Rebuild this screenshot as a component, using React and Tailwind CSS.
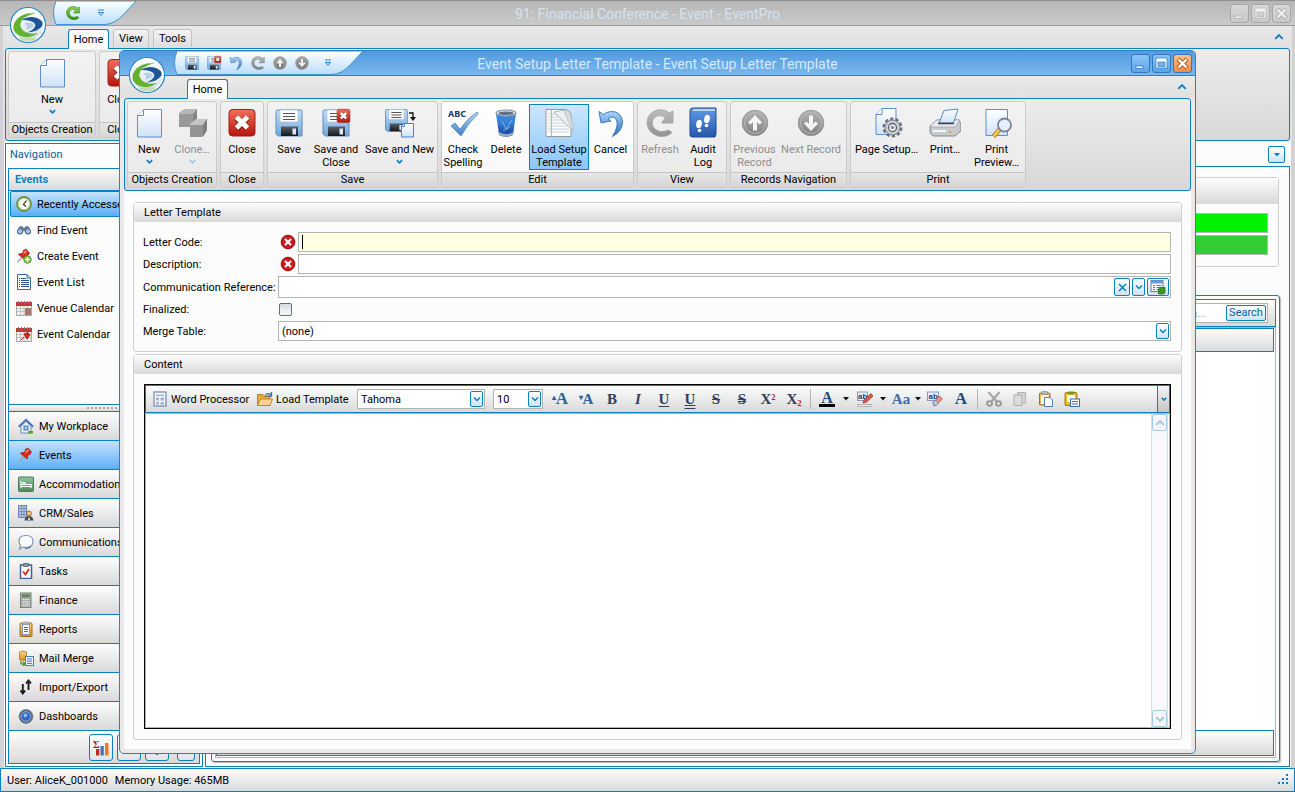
import React from "react";

/* ---------- shared paint servers ---------- */

const GRADS = [
  ["gDoc", "#ffffff", "#cfe2f8"],
  ["gRed", "#f0705a", "#b5150c"],
  ["gBlue", "#b9dcf8", "#3f7fc4"],
  ["gSave", "#c5e2f8", "#6fa6dc"],
  ["gDark", "#5a6068", "#14181c"],
  ["gGreyD", "#a9a9a9", "#6e6e6e"],
  ["gBook", "#5f9be8", "#2558a8"],
  ["gBin", "#5aa8f0", "#0b3f9c"],
  ["gGreen", "#8fd84a", "#2f9410"],
  ["gBed", "#8fc49a", "#4d8a5a"],
  ["gGold", "#fbd98a", "#d98a1e"],
  ["gOrb", "#ffffff", "#d4dfe8"],
  ["gUndo", "#a9d4fa", "#2a6cbc"],
  ["gQat", "#ffffff", "#b9ddfb"],
];

function Defs() {
  return (
    <svg width="0" height="0" className="absolute" aria-hidden="true">
      <defs>
        {GRADS.map(([id, a, b]) => (
          <linearGradient key={id} id={id} x1="0" y1="0" x2="0" y2="1">
            <stop offset="0" stopColor={a} />
            <stop offset="1" stopColor={b} />
          </linearGradient>
        ))}
      </defs>
    </svg>
  );
}

function Svg({ size = 32, box = 32, children, className = "" }) {
  return (
    <svg width={size} height={size} viewBox={`0 0 ${box} ${box}`} fill="none" aria-hidden="true" className={`shrink-0 ${className}`}>
      {children}
    </svg>
  );
}

/* ---------- large ribbon icons ---------- */

const NewIcon = (p) => (
  <Svg {...p}>
    <path d="M10.5 2.5H28.5V30H4.500V8.500Z" fill="url(#gDoc)" stroke="#5a8fd0" />
    <path d="M10.500 2.500V8.500H4.500" fill="#fff" stroke="#5a8fd0" />
  </Svg>
);

const CloneIcon = (p) => (
  <Svg {...p}>
    <path d="M3 6L9 2H21L18 6V17L16 20H3Z" fill="#8a8a8a" />
    <path d="M3 6L9 2H21L17 7H3Z" fill="#adadad" />
    <path d="M17 7L21 2V13L17 19Z" fill="#737373" />
    <path d="M14 17L20 12H31V23L26 30H14Z" fill="#858585" />
    <path d="M14 17L20 12H31L27 18H14Z" fill="#bdbdbd" />
    <path d="M27 18L31 12V23L27 30Z" fill="#6c6c6c" />
  </Svg>
);

const RedBox = () => (
  <>
    <rect x="3" y="2.500" width="26" height="26.500" rx="3.500" fill="url(#gRed)" stroke="#a02018" />
    <path d="M10.500 10.500L21.500 21.500M21.500 10.500L10.500 21.500" stroke="#8c120a" strokeWidth="6.500" />
    <path d="M10.500 10L21.500 21M21.500 10L10.500 21" stroke="#fff" strokeWidth="5" />
  </>
);

const CloseIcon = (p) => (
  <Svg {...p}>
    <RedBox />
  </Svg>
);

const Floppy = () => (
  <>
    <path d="M3 4.500Q3 3 4.500 3H28Q29 3 29 4.500V29H5.500L3 27Z" fill="url(#gSave)" stroke="#5b8cc4" />
    <rect x="7" y="3" width="18" height="12" fill="#fff" stroke="#9fb6cc" strokeWidth=".6" />
    <path d="M10 6.500H22M10 9.500H22M10 12.500H22" stroke="#555" strokeWidth="1.200" />
    <path d="M8 19.500H25V29H8Z" fill="url(#gDark)" />
    <rect x="19.500" y="21.500" width="3.500" height="6" fill="#dce8f4" />
  </>
);

const SaveIcon = (p) => (
  <Svg {...p}>
    <Floppy />
  </Svg>
);

const SaveCloseIcon = (p) => (
  <Svg {...p}>
    <Floppy />
    <g transform="translate(15.500 1) scale(.5)">
      <RedBox />
    </g>
  </Svg>
);

const SaveNewIcon = (p) => (
  <Svg {...p}>
    <g transform="translate(-1 0) scale(.84)">
      <Floppy />
    </g>
    <path d="M25 6H29V13" stroke="#111" strokeWidth="1.300" />
    <path d="M26 10H32L29 14Z" fill="#111" />
    <path d="M20 16.500H29.500V30H17.500V19Z" fill="url(#gDoc)" stroke="#4a82cc" />
    <path d="M20.500 16.500V19.500H17.500" stroke="#4a82cc" />
  </Svg>
);

const SpellIcon = (p) => (
  <Svg {...p}>
    <text x="1" y="10" fontFamily="Noto Sans, sans-serif" fontSize="9" fontWeight="700" fill="#26376a">ABC</text>
    <path d="M4 19L8 16L13 22Q20 12 30 5L31 7Q22 15 14 29Z" fill="url(#gBlue)" stroke="#4a86c8" strokeWidth=".8" />
  </Svg>
);

const BinIcon = (p) => (
  <Svg {...p}>
    <path d="M6 6L9 28Q16 31.500 23 28L26 6Z" fill="url(#gBin)" />
    <path d="M6 6Q16 11 26 6L24.600 15Q16 18 7.400 15Z" fill="#2f83dc" opacity=".7" />
    <path d="M12 14L16 22L22 13M13 24L20 20" stroke="#9fd0ff" strokeWidth="1" opacity=".7" />
    <path d="M9 25Q16 29 23.500 25L23 28Q16 31.500 9 28Z" fill="#9aa8ba" />
    <ellipse cx="16" cy="6" rx="10" ry="3" fill="#dfe6ee" stroke="#8593a5" strokeWidth="1.200" />
    <ellipse cx="16" cy="6.200" rx="7.500" ry="1.700" fill="#5f6f86" />
  </Svg>
);

const TemplateIcon = (p) => (
  <Svg {...p}>
    <path d="M3 2.500H22Q27 3 28 8V29.500H3Z" fill="#fbfbfb" stroke="#9a9a9a" />
    <path d="M5 7H26M5 10H26M5 13H26M5 16H26M5 19H26M5 22H26M5 25H26" stroke="#c4cbd4" strokeWidth=".9" />
    <path d="M8.500 3V29" stroke="#f0a0a0" />
    <path d="M11 5L30 24L28 18L21 3Z" fill="#eef0f3" stroke="#a2a8b0" strokeWidth=".8" />
    <path d="M21 3Q27 3 27.500 9L30 18V24L25 14Z" fill="#d9dde2" stroke="#b4b8be" strokeWidth=".7" />
  </Svg>
);

const UndoIcon = (p) => (
  <Svg {...p}>
    <path d="M4 4.500L6 16L16 14L13 11.500Q19 8 21.500 13Q24 19 17.500 29.500Q28 24 27.500 14Q26 4 15.500 4.500Q11 5 8.500 7.500Z" fill="url(#gUndo)" stroke="#3470b4" strokeWidth=".9" />
  </Svg>
);

const RefreshIcon = ({ green, ...p }) => (
  <Svg {...p}>
    <path
      d="M24.500 23L28 25.500Q22 31 14 29Q4 26 3 16Q3.500 5 14 3Q21 2 25 6L29 4V16H17.500L21.500 10.500Q15 6.500 10 11Q6.500 16 10 21Q15.500 27 24.500 23Z"
      fill={green ? "url(#gGreen)" : "url(#gGreyD)"}
      stroke={green ? "#24700c" : "#8a8a8a"}
      strokeWidth=".9"
      opacity={green ? 1 : 0.85}
    />
  </Svg>
);

const AuditIcon = (p) => (
  <Svg {...p}>
    <path d="M3 3.500Q3 1 6 1H29V27L28 30H5Q3 30 3 28Z" fill="url(#gBook)" stroke="#1f4c98" />
    <path d="M6 3H28" stroke="#dbe8fb" strokeWidth="1.500" />
    <ellipse cx="12" cy="17" rx="2.800" ry="4.200" fill="#fff" transform="rotate(10 12 17)" />
    <ellipse cx="12.500" cy="23.500" rx="1.800" ry="1.800" fill="#fff" />
    <ellipse cx="20" cy="12" rx="2.800" ry="4.200" fill="#fff" transform="rotate(10 20 12)" />
    <ellipse cx="19.500" cy="18.500" rx="1.800" ry="1.800" fill="#fff" />
  </Svg>
);

const ArrowCircle = ({ down, ...p }) => (
  <Svg {...p}>
    <circle cx="16" cy="16" r="12.800" fill="url(#gGreyD)" stroke="#8e8e8e" />
    <circle cx="16" cy="16" r="10.500" stroke="#b8b8b8" strokeWidth=".8" />
    <path
      d="M16 8L23 15.500L20.500 17.500L18 15V23.500H14V15L11.500 17.500L9 15.500Z"
      fill="#f6f6f6"
      transform={down ? "rotate(180 16 16)" : undefined}
    />
  </Svg>
);
const UpIcon = (p) => <ArrowCircle {...p} />;
const DownIcon = (p) => <ArrowCircle down {...p} />;

const PageSetupIcon = (p) => (
  <Svg {...p}>
    <path d="M11 1.500H25V27.500H5V7.500Z" fill="url(#gDoc)" stroke="#5a8fd0" />
    <path d="M11 1.500V7.500H5" fill="#fff" stroke="#5a8fd0" />
    <circle cx="21.500" cy="20.500" r="8.500" stroke="#6f747c" strokeWidth="3" strokeDasharray="3.300 2.040" />
    <circle cx="21.500" cy="20.500" r="7.500" fill="#c9ced6" stroke="#7d838c" />
    <circle cx="21.500" cy="20.500" r="4" fill="#eef1f5" stroke="#5f656e" strokeWidth="1.300" />
    <circle cx="21.500" cy="20.500" r="1.800" fill="#8b919a" />
  </Svg>
);

const PrinterIcon = (p) => (
  <Svg {...p}>
    <path d="M1 19L8 13H30L32 17V24L26 29H4L1 26Z" fill="#c6c9ce" stroke="#80858d" strokeWidth=".9" />
    <path d="M1 19L8 13H31L26 20H4Z" fill="#e9ebee" stroke="#9a9ea5" strokeWidth=".7" />
    <path d="M10 16L15 3.500L29 2L24.500 16Z" fill="url(#gDoc)" stroke="#4c7fbe" strokeWidth=".9" />
    <path d="M9 16.500H25" stroke="#3c4148" strokeWidth="1.500" />
    <path d="M4 24H17" stroke="#f6f6f6" strokeWidth="2" />
    <circle cx="21" cy="25" r="1.200" fill="#f2a020" />
  </Svg>
);

const PreviewIcon = (p) => (
  <Svg {...p}>
    <path d="M5 2.500H26.500V28.500H5Z" fill="url(#gDoc)" stroke="#5a8fd0" />
    <path d="M19 22L12.500 29.500" stroke="#c98a20" strokeWidth="4.500" />
    <path d="M18.500 22.500L13 29" stroke="#f6d060" strokeWidth="2" />
    <circle cx="23.500" cy="18" r="6.500" fill="#e4f0fb" stroke="#7b8798" strokeWidth="1.800" />
  </Svg>
);

/* ---------- small icons ---------- */

const S16 = (p) => <Svg size={16} box={16} {...p} />;

const ClockIcon = () => (
  <S16>
    <circle cx="8" cy="8" r="7" fill="#f4f8ec" stroke="#6f9040" strokeWidth="1.800" />
    <circle cx="8" cy="8" r="5.500" stroke="#c4d8a0" />
    <path d="M10.500 4.500L7.500 8.500L10 10.500" stroke="#333" strokeWidth="1.200" />
  </S16>
);
const BinocularIcon = () => (
  <S16>
    <path d="M3 5Q5 3 7 5L8 6L9 5Q11 3 13 5L15 9Q15.500 12.500 12 12.500Q9 12.500 8.500 9H7.500Q7 12.500 4 12.500Q.5 12.500 1 9Z" fill="#6b7f9c" />
    <circle cx="4" cy="9.300" r="2.500" fill="#a8c8ec" stroke="#566a88" />
    <circle cx="12" cy="9.300" r="2.500" fill="#a8c8ec" stroke="#566a88" />
  </S16>
);
const PinShape = () => (
  <>
    <path d="M1.500 14.500L6 9" stroke="#a6a6a6" strokeWidth="1.300" />
    <path d="M7 2.500L10 1L13.500 5L12 7.500L11 7.500L9.500 9.500Q10 11.500 9 12L2.500 6.500Q3.500 5 5.500 5.500L7.500 4Z" fill="#d9291c" stroke="#8e140c" strokeWidth=".6" />
    <path d="M8.500 3L10 2.300L11 3.500L7 7Z" fill="#ff8a78" />
  </>
);
const PinIcon = () => (
  <S16>
    <PinShape />
  </S16>
);
const PinPlusIcon = () => (
  <S16>
    <PinShape />
    <circle cx="11.500" cy="11.500" r="3.800" fill="#7cc242" stroke="#4a8a1c" strokeWidth=".7" />
    <path d="M11.500 9.300V13.700M9.300 11.500H13.700" stroke="#fff" strokeWidth="1.500" />
  </S16>
);
const ListIcon = () => (
  <S16>
    <path d="M1.500 .5H11L14.500 4V15.500H1.500Z" fill="#fff" stroke="#2f6ca8" />
    <path d="M11 .5V4H14.500" stroke="#2f6ca8" />
    <path d="M5 4.500H10M5 6.500H13M5 8.500H13M5 10.500H13M5 12.500H13" stroke="#274f86" />
    <path d="M3 4.500H4M3 6.500H4M3 8.500H4M3 10.500H4M3 12.500H4" stroke="#274f86" />
  </S16>
);
const CalendarIcon = ({ event }) => (
  <S16>
    <rect x=".5" y="2.500" width="15" height="13" fill="#f2f2f2" stroke="#aaa" />
    <rect x="0" y="2" width="16" height="4" fill="#c2383a" />
    <path d="M2.500 1V4M5.500 1V4M8.500 1V4M11.500 1V4M14 1V4" stroke="#777" />
    <path d="M1 8.500H15M1 11.500H15M4.500 6V15M8 6V15M11.500 6V15" stroke="#b8b8b8" strokeWidth=".8" />
    {event ? <path d="M5 14L8 11M8 8L12 6.500L14 9L11 13Z" fill="#d9291c" stroke="#b01c14" /> : <path d="M9 8H15V15H9Z" fill="#a5786a" />}
  </S16>
);
const HomeIcon = () => (
  <S16>
    <path d="M3 8V15H13V8L8 3.500Z" fill="#f2f6fb" stroke="#6b88b4" />
    <path d="M.8 8.800L8 1.800L15.200 8.800" stroke="#4b78b8" strokeWidth="1.900" />
    <rect x="6" y="8" width="4" height="4" fill="#9cc4ee" stroke="#4b78b8" />
    <path d="M10 13H15V15.500H10Z" fill="#5aa82c" />
  </S16>
);
const BedIcon = () => (
  <S16>
    <rect x=".5" y="1" width="15" height="14.500" rx="1" fill="url(#gBed)" stroke="#4f7c58" />
    <path d="M3 5V12M3 10.500H13V12M3.500 8.500H13V10.500" stroke="#fff" strokeWidth="1.200" />
    <rect x="4.500" y="6" width="3" height="1.800" fill="#fff" />
  </S16>
);
const CrmIcon = () => (
  <S16>
    <rect x=".5" y=".5" width="8" height="12" fill="#b4c6e6" stroke="#6c84b4" />
    <path d="M1 3.500H8M1 6.500H8M1 9.500H8M3.500 1V12M6 1V12" stroke="#6c84b4" strokeWidth=".7" />
    <path d="M6.500 15.500Q7 11 11 11Q15 11 15.500 15.500Z" fill="#4a4a50" />
    <circle cx="11" cy="8.500" r="2.500" fill="#f0c080" stroke="#7a4a18" strokeWidth=".7" />
    <path d="M11 11.500L10 15H12Z" fill="#fff" />
  </S16>
);
const BubbleIcon = () => (
  <S16>
    <path d="M8 1.500Q15 1.500 15 7.500Q15 13.500 8 13.500Q6.500 13.500 5 13L1.500 14.800L2.800 11.500Q1 10 1 7.500Q1 1.500 8 1.500Z" fill="#fdfdfe" stroke="#8090a8" strokeWidth="1.100" />
    <path d="M7 14.300Q11 14.300 13 12.500" stroke="#4c7cbc" strokeWidth="1.200" />
  </S16>
);
const ClipCheckIcon = () => (
  <S16>
    <rect x="2.500" y="2" width="11" height="13.500" fill="#fff" stroke="#3f6496" strokeWidth="1.500" />
    <rect x="5" y=".5" width="6" height="3" rx="1" fill="#8d949c" stroke="#4c5158" strokeWidth=".7" />
    <path d="M5 8.500L7.500 11.500L11 6" stroke="#d02820" strokeWidth="1.800" />
  </S16>
);
const CalcIcon = () => (
  <S16>
    <rect x="2.500" y="1" width="10.500" height="14.500" fill="#a9aca8" stroke="#7c807c" />
    <rect x="4" y="2.500" width="7.500" height="2.800" fill="#4f8a50" />
    <path d="M4.500 7.500H11.500M4.500 9.700H11.500M4.500 11.900H11.500M4.500 14H11.500" stroke="#f5f5f5" strokeWidth="1.200" strokeDasharray="1.200 .8" />
  </S16>
);
const ReportIcon = () => (
  <S16>
    <rect x="2" y="2" width="12" height="13.500" rx="1" fill="url(#gGold)" stroke="#a86a10" />
    <rect x="4.500" y="3.500" width="7" height="10" fill="#fff" stroke="#6c88b8" strokeWidth=".8" />
    <path d="M6 6.500H10M6 8.500H10M6 10.500H10" stroke="#4470b0" />
    <rect x="5.500" y=".7" width="5" height="2.600" fill="#a8b0bc" />
  </S16>
);
const MailMergeIcon = () => (
  <S16>
    <path d="M1.500 2Q4.500 0 8.500 2V9.500Q4.500 11.500 1.500 9.500Z" fill="url(#gGold)" stroke="#b0762a" strokeWidth=".8" />
    <path d="M3 11V14H6M5 12L7 14L5 16" stroke="#2f9410" strokeWidth="1.200" />
    <rect x="7.500" y="6.500" width="8" height="9" fill="#eef5fd" stroke="#4a78b8" />
    <path d="M9 9H14M9 11.200H14M9 13.400H14" stroke="#4a78b8" />
  </S16>
);
const ArrowsIcon = () => (
  <S16>
    <path d="M4.800 5V14M2.500 11.500L4.800 14.500L7.200 11.500M10.500 11V2M8 4.500L10.500 1.500L13 4.500" stroke="#1c1c1c" strokeWidth="1.900" />
  </S16>
);
const GaugeIcon = () => (
  <S16>
    <circle cx="8" cy="8.500" r="7" fill="#5c6470" stroke="#8a919c" />
    <circle cx="8" cy="8.500" r="4.800" fill="#2468d0" stroke="#a8bcdc" strokeWidth=".8" />
    <circle cx="7.500" cy="7.500" r="2" fill="#8cc0ff" />
    <circle cx="8.500" cy="8.800" r=".9" fill="#e03020" />
  </S16>
);
const SumChartIcon = () => (
  <S16>
    <text x="0" y="8" fontFamily="Liberation Serif, serif" fontSize="10" fontWeight="700" fill="#b01818">Σ</text>
    <rect x="3" y="9" width="3.300" height="6.500" fill="#c8281c" />
    <rect x="7.500" y="6" width="3.300" height="9.500" fill="#4a70b4" />
    <rect x="12" y="3" width="3.500" height="12.500" fill="#ee7a18" />
  </S16>
);
const WordIcon = () => (
  <S16>
    <rect x="2" y="1" width="12" height="14" fill="#f4f7fc" stroke="#8090b8" strokeWidth="1.300" />
    <path d="M4 3.500H12V5H4ZM4 6.500H7V9.500H4ZM8.500 6.500H12V9.500H8.500ZM4 11H7V13.500H4ZM8.500 11H12V13.500H8.500Z" fill="#a4b2d4" />
  </S16>
);
const FolderIcon = () => (
  <S16>
    <path d="M.5 3.500H6L7.500 5.500H13V14.500H.5Z" fill="#e8a83c" stroke="#a86c14" strokeWidth=".8" />
    <path d="M.5 14.500L3.500 8H15.500L12.800 14.500Z" fill="#fbd68a" stroke="#b87a1c" strokeWidth=".8" />
    <path d="M8 5Q10 1 14 3.500M14.500 1V5H10.500" stroke="#3a70b0" strokeWidth="1.300" />
  </S16>
);
const HighlightIcon = () => (
  <S16>
    <rect x=".5" y="1" width="10" height="8.500" fill="#e8eefa" stroke="#6f86b8" strokeWidth=".8" />
    <text x="1" y="8" fontFamily="Liberation Sans, sans-serif" fontSize="8" fill="#28407c">ab</text>
    <path d="M7 9L14 2.500L16 5L9.500 11L6 12Z" fill="#d85a4c" stroke="#8c2c24" strokeWidth=".7" />
    <rect x="1" y="13.500" width="13" height="2" fill="#eee" stroke="#999" strokeWidth=".7" />
  </S16>
);
const EraserIcon = () => (
  <S16>
    <rect x=".5" y="1" width="11" height="8.500" fill="#e8eefa" stroke="#6f86b8" strokeWidth=".8" />
    <text x="1.500" y="8" fontFamily="Liberation Sans, sans-serif" fontSize="8" fill="#28407c">ab</text>
    <path d="M6 11.500L12.500 5L15.500 8L9 14.500H7Z" fill="#f0917e" stroke="#a8483c" strokeWidth=".7" />
    <path d="M6 11.500L8.500 9L11.500 12L9 14.500H7Z" fill="#b8cef0" stroke="#5878b0" strokeWidth=".7" />
  </S16>
);
const CutIcon = () => (
  <S16>
    <path d="M2.500 1L11 11M13.500 1L5 11" stroke="#a8a8a8" strokeWidth="2.200" />
    <ellipse cx="3.500" cy="12.500" rx="2.500" ry="2.300" stroke="#9a9a9a" strokeWidth="1.900" />
    <ellipse cx="12.500" cy="12.500" rx="2.500" ry="2.300" stroke="#9a9a9a" strokeWidth="1.900" />
  </S16>
);
const CopyIcon = () => (
  <S16>
    <rect x="5.500" y="1.500" width="8" height="10.500" fill="#d4d4d4" stroke="#b4b4b4" />
    <rect x="2" y="4" width="8" height="10.500" fill="#dcdcdc" stroke="#b0b0b0" />
  </S16>
);
const PasteIcon = () => (
  <S16>
    <rect x="1.500" y="2" width="10.500" height="12" rx="1" fill="#e8b470" stroke="#a86a28" />
    <rect x="3" y="4" width="7.500" height="9" fill="#fff4e4" />
    <rect x="4" y=".7" width="5.500" height="2.800" fill="#b4b8c0" stroke="#777c84" strokeWidth=".6" />
    <path d="M6.500 6.500H12L14.500 9V15.500H6.500Z" fill="#fff" stroke="#5c7cb0" />
  </S16>
);
const PasteSpecialIcon = () => (
  <S16>
    <rect x="1" y="1.500" width="12" height="13" rx="1" fill="#e9bb2c" stroke="#a07a10" />
    <rect x="3" y="4" width="8" height="7" fill="#fff8d8" />
    <rect x="4" y=".5" width="6" height="2.800" fill="#5a9a4c" />
    <rect x="6.500" y="8" width="9" height="7.500" fill="#fff" stroke="#3c6cb4" />
    <path d="M8 10.500H14M8 13H14" stroke="#3c6cb4" strokeWidth="1.200" />
  </S16>
);
const LookupIcon = () => (
  <S16>
    <rect x="1" y="1.500" width="12" height="11" fill="#fff" stroke="#587cae" />
    <rect x="1" y="1.500" width="12" height="3" fill="#6a9ce0" />
    <path d="M3 6.500H5M6.500 6.500H11.500M3 8.500H5M6.500 8.500H11.500M3 10.500H5M6.500 10.500H11.500" stroke="#777" />
    <path d="M8.500 10L10 8.500H15V13.500L13.500 15H8.500Z" fill="#3c9a24" stroke="#1f6410" strokeWidth=".7" />
  </S16>
);
const ErrorIcon = () => (
  <S16 className="mx-0.5">
    <circle cx="8" cy="8" r="6.800" fill="#d0181c" stroke="#98080c" />
    <path d="M5 5L11 11M11 5L5 11" stroke="#fff" strokeWidth="2.200" />
  </S16>
);

const Chevron = ({ up, color = "#0a81bf", size = 8, width = 1.5 }) => (
  <svg width={size} height={size} viewBox="0 0 8 8" fill="none" aria-hidden="true" className="shrink-0">
    <path d={up ? "M1 5.500L4 2.500L7 5.500" : "M1 2.500L4 5.500L7 2.500"} stroke={color} strokeWidth={width} />
  </svg>
);
const Drop = ({ color = "#111" }) => (
  <svg width="6" height="4" viewBox="0 0 6 4" aria-hidden="true" className="shrink-0">
    <path d="M0 0H6L3 3.500Z" fill={color} />
  </svg>
);

const Orb = () => (
  <svg width="38" height="38" viewBox="0 0 38 38" fill="none" aria-hidden="true">
    <circle cx="19" cy="19" r="17.500" fill="url(#gOrb)" stroke="#1f87c8" strokeWidth="1.200" />
    <circle cx="19" cy="19" r="16" stroke="#fff" strokeWidth="1.200" />
    <path d="M27 7.500Q15 6 8 13Q1.500 21 6.500 26.500Q11 31.500 19 31Q25 30.500 29 27Q20 29 14.500 25Q9 20 13 14Q18 8.500 27 7.500Z" fill="#62b22f" />
    <path d="M12.500 14Q20 9.500 28 12Q35.500 15 33 20Q29.500 25.500 18 26.500Q26 23.500 26.500 19Q25 14 12.500 14Z" fill="#1e5596" />
    <path d="M15 17.500Q21 15 25.500 19Q22 23 17 23.500Q20 20 15 17.500Z" fill="#8fbbe4" opacity=".6" />
    <ellipse cx="19" cy="33" rx="9" ry="2" fill="#b8d49a" opacity=".6" />
  </svg>
);

/* ---------- window chrome ---------- */

const CAPTION_GLYPHS = [
  ["Minimize", (c) => <rect x="4" y="11" width="7" height="2.500" stroke={c} fill="#fff" strokeWidth=".8" />],
  ["Maximize", (c) => <path d="M3 3H14V13H3ZM5 7H12V11.500H5Z" fill="#fff" fillRule="evenodd" stroke={c} strokeWidth=".7" />],
  ["Close", (c) => (
    <>
      <path d="M4 4L13 13M13 4L4 13" stroke={c} strokeWidth="4.500" />
      <path d="M4.500 4.500L12.500 12.500M12.500 4.500L4.500 12.500" stroke="#fff" strokeWidth="2.400" />
    </>
  )],
];

function CaptionButtons({ active }) {
  return (
    <div className={`flex justify-end gap-[2px] pt-[3px] ${active ? "pr-[3px]" : "pr-1"}`}>
      {CAPTION_GLYPHS.map(([name, glyph]) => {
        const look = !active
          ? "border-[#a6a6a6] bg-linear-to-b from-[#d8d8d8] to-[#c8c8c8]"
          : name === "Close"
            ? "border-[#2f78c0] bg-linear-to-b from-[#fbc08a] to-[#f08c44]"
            : "border-[#2f78c0] bg-linear-to-b from-[#8cc4f4] to-[#5ea6e4]";
        const ink = !active ? "#a6a6a6" : name === "Close" ? "#c05c18" : "#2f78c0";
        return (
          <button key={name} type="button" aria-label={name} className={`flex h-[19px] w-[19px] items-center justify-center rounded-[3px] border ${look}`}>
            <svg width="17" height="17" viewBox="0 0 17 17" fill="none" opacity={active ? 1 : 0.7}>{glyph(ink)}</svg>
          </button>
        );
      })}
    </div>
  );
}

function TitleBar({ title, active, children }) {
  return (
    <header
      className={`grid h-[25px] grid-cols-[1fr_auto_1fr] border-b ${
        active
          ? "border-[#2f7fc8] bg-linear-to-b from-[#529ade] to-[#7ab8ef]"
          : "border-[#9c9c9c] bg-linear-to-b from-[#b6b6b6] to-[#cacaca]"
      }`}
    >
      <div className="flex">{children}</div>
      <h1 className={`self-center pt-px text-[14px] leading-[18px] ${active ? "text-[#d3e9fd]" : "text-[#d3e2ef]"}`}>{title}</h1>
      <CaptionButtons active={active} />
    </header>
  );
}

function QuickAccess({ icons, wide }) {
  return (
    <div className={`relative flex h-6 items-center ${wide ? "ml-[54px] w-[190px]" : "ml-[53px] w-[84px]"}`}>
      <svg className="absolute inset-0" width={wide ? 190 : 84} height="24" viewBox={wide ? "0 0 190 24" : "0 0 84 24"} aria-hidden="true">
        <path
          d={wide ? "M3 0Q-2 12 3 23.500H158Q168 23 176 14L189 0Z" : "M3 0Q-2 12 3 23.500H52Q62 23 70 14L83 0Z"}
          fill="url(#gQat)"
          stroke="#3f93d2"
        />
      </svg>
      <div className={`relative flex items-center ${wide ? "gap-1.5 pl-2.5" : "gap-4 pl-3"}`}>
        {icons.map(([name, Icon, props]) => (
          <button key={name} type="button" aria-label={name}>
            <Icon size={16} {...props} />
          </button>
        ))}
        <button type="button" aria-label="Customize" className={wide ? "pl-2" : ""}>
          <svg width="8" height="8" viewBox="0 0 8 8" fill="none"><path d="M1 1H7M1.500 3.500H6.500L4 6.500Z" stroke="#2a86c8" /></svg>
        </button>
      </div>
    </div>
  );
}

function TabRow({ tabs, className }) {
  return (
    <nav className={`flex h-[22px] items-end bg-linear-to-b from-[#e9e9e9] to-[#e0e0e0] ${className}`}>
      {tabs.map((t, i) =>
        i === 0 ? (
          <button key={t} type="button" className="relative z-10 -mb-px mr-1 h-5 w-[41px] rounded-t-[3px] border border-b-0 border-[#0a81bf] bg-[#fcfcfc]">
            {t}
          </button>
        ) : (
          <button key={t} type="button" className="mb-px mr-1 h-[18px] min-w-9 rounded-t-[3px] border border-b-0 border-[#c3c3c3] bg-linear-to-b from-[#f4f4f4] to-[#dedede] px-[5px]">
            {t}
          </button>
        )
      )}
      <button type="button" aria-label="Collapse ribbon" className="mb-1.5 ml-auto mr-2">
        <Chevron up size={10} />
      </button>
    </nav>
  );
}

function RibbonButton({ icon: Icon, label, w, drop, disabled, selected }) {
  return (
    <button
      type="button"
      disabled={disabled}
      className={`flex h-[66px] flex-col items-center border pt-[2px] leading-[13px] ${w} ${
        selected ? "border-[#0a81bf] bg-linear-to-b from-[#cbe6fd] to-[#8ac6fb]" : "border-transparent"
      } ${disabled ? "text-[#8f8f8f]" : ""}`}
    >
      <span className={disabled ? "opacity-85" : ""}><Icon size={32} /></span>
      <span className="mt-1 flex flex-col items-center whitespace-nowrap">
        {label.map((l) => (
          <span key={l}>{l}</span>
        ))}
      </span>
      {drop && (
        <span className="mt-0.5">
          <Chevron color={disabled ? "#9cc8e4" : "#0a81bf"} size={7} width={2} />
        </span>
      )}
    </button>
  );
}

function Ribbon({ groups }) {
  return (
    <div className="flex gap-[3px] rounded-[3px] border border-[#0a81bf] bg-linear-to-b from-[#ececec] to-[#d8d8d8] p-[2px]">
      {groups.map((g) => (
        <section
          key={g.title}
          className={`flex flex-col overflow-hidden rounded-[3px] border border-[#cbcbcb] bg-linear-to-b ${
            g.hot ? "from-[#ffffff] to-[#f6f6f6]" : "from-[#f2f2f2] to-[#e9e9e9]"
          }`}
        >
          <div className="flex px-px py-[2px]">
            {g.items.map((b) => (
              <RibbonButton key={b.label[0]} {...b} />
            ))}
          </div>
          <h2 className="h-[15px] border-t border-[#c4c4c4] bg-linear-to-b from-[#e6e6e6] to-[#d6d6d6] text-center leading-[14px] whitespace-nowrap">{g.title}</h2>
        </section>
      ))}
    </div>
  );
}

const MAIN_GROUPS = [
  { title: "Objects Creation", items: [{ label: ["New"], icon: NewIcon, w: "w-[84px]", drop: true }] },
  { title: "Close", items: [{ label: ["Close"], icon: CloseIcon, w: "w-10" }] },
];

const DIALOG_GROUPS = [
  {
    title: "Objects Creation",
    items: [
      { label: ["New"], icon: NewIcon, w: "w-10", drop: true },
      { label: ["Clone…"], icon: CloneIcon, w: "w-[46px]", drop: true, disabled: true },
    ],
  },
  { title: "Close", items: [{ label: ["Close"], icon: CloseIcon, w: "w-10" }] },
  {
    title: "Save",
    items: [
      { label: ["Save"], icon: SaveIcon, w: "w-10" },
      { label: ["Save and", "Close"], icon: SaveCloseIcon, w: "w-[54px]" },
      { label: ["Save and New"], icon: SaveNewIcon, w: "w-[73px]", drop: true },
    ],
  },
  {
    title: "Edit",
    hot: true,
    items: [
      { label: ["Check", "Spelling"], icon: SpellIcon, w: "w-10" },
      { label: ["Delete"], icon: BinIcon, w: "w-[46px]" },
      { label: ["Load Setup", "Template"], icon: TemplateIcon, w: "w-[60px]", selected: true },
      { label: ["Cancel"], icon: UndoIcon, w: "w-[43px]" },
    ],
  },
  {
    title: "View",
    items: [
      { label: ["Refresh"], icon: RefreshIcon, w: "w-[42px]", disabled: true },
      { label: ["Audit", "Log"], icon: AuditIcon, w: "w-11" },
    ],
  },
  {
    title: "Records Navigation",
    items: [
      { label: ["Previous", "Record"], icon: UpIcon, w: "w-[45px]", disabled: true },
      { label: ["Next Record"], icon: DownIcon, w: "w-[68px]", disabled: true },
    ],
  },
  {
    title: "Print",
    items: [
      { label: ["Page Setup…"], icon: PageSetupIcon, w: "w-[69px]" },
      { label: ["Print…"], icon: PrinterIcon, w: "w-12" },
      { label: ["Print", "Preview…"], icon: PreviewIcon, w: "w-[55px]" },
    ],
  },
];

/* ---------- main window ---------- */

const EVENT_LINKS = [
  ["Recently Accessed", ClockIcon],
  ["Find Event", BinocularIcon],
  ["Create Event", PinPlusIcon],
  ["Event List", ListIcon],
  ["Venue Calendar", CalendarIcon],
  ["Event Calendar", () => <CalendarIcon event />],
];

const MODULES = [
  ["My Workplace", HomeIcon],
  ["Events", PinIcon],
  ["Accommodations", BedIcon],
  ["CRM/Sales", CrmIcon],
  ["Communications", BubbleIcon],
  ["Tasks", ClipCheckIcon],
  ["Finance", CalcIcon],
  ["Reports", ReportIcon],
  ["Mail Merge", MailMergeIcon],
  ["Import/Export", ArrowsIcon],
  ["Dashboards", GaugeIcon],
];

const PALE_BAR = "bg-linear-to-b from-[#fdfdfd] to-[#d9d9d9]";

function Sidebar() {
  return (
    <aside className="flex w-[198px] shrink-0 flex-col border border-[#0a81bf] bg-[#fcfcfc] p-[2px]">
      <h2 className="h-[22px] pl-0.5 text-[#0f5f96] leading-[18px]">Navigation</h2>
      <div className="flex flex-1 flex-col border border-[#0a81bf]">
        <h3 className={`h-[22px] border-b border-[#0a81bf] pl-1.5 font-bold leading-[22px] text-[#0a81bf] ${PALE_BAR}`}>Events</h3>
        <ul className="flex flex-1 flex-col pl-px">
          {EVENT_LINKS.map(([name, Icon], i) => (
            <li key={name}>
              <a
                href="#"
                className={`flex h-[26px] items-center gap-[5px] rounded-[2px] border pl-[5px] whitespace-nowrap ${
                  i === 0 ? "border-[#0a81bf] bg-linear-to-b from-[#c6e4fd] to-[#58adf8]" : "border-transparent"
                }`}
              >
                <Icon />
                {name}
              </a>
            </li>
          ))}
        </ul>
        <div className={`flex h-[7px] items-center justify-center border-t border-[#0a81bf] ${PALE_BAR}`}>
          <span className="w-[34px] border-t-2 border-dotted border-[#aaa]" />
        </div>
        {MODULES.map(([name, Icon]) => (
          <a
            key={name}
            href="#"
            className={`flex h-[29px] items-center gap-[5px] border-t border-[#0a81bf] pl-[9px] whitespace-nowrap ${
              name === "Events" ? "bg-linear-to-b from-[#c2e2fd] to-[#5cb0f9]" : PALE_BAR
            }`}
          >
            <Icon />
            {name}
          </a>
        ))}
        <div className={`flex h-[33px] justify-end gap-1 border-t border-[#0a81bf] px-1 pt-[3px] ${PALE_BAR}`}>
          {["Summary", "Charts", "Tools", "More"].map((n, i) => (
            <button
              key={n}
              type="button"
              aria-label={n}
              className={`flex h-[27px] items-center justify-center rounded-[3px] border border-[#0a81bf] bg-linear-to-b from-[#fff] to-[#e0e4e8] ${n === "More" ? "ml-1 w-[18px]" : "w-6"}`}
            >
              {i === 0 && <SumChartIcon />}
              {i === 1 && (
                <svg width="16" height="16" viewBox="0 0 16 16"><rect x="2" y="6" width="12" height="8" fill="#e07a28" /></svg>
              )}
              {i === 2 && (
                <svg width="16" height="16" viewBox="0 0 16 16" fill="none"><path d="M4 10L8 14L12 10M6 13L10 9" stroke="#567" strokeWidth="2" /></svg>
              )}
            </button>
          ))}
        </div>
      </div>
    </aside>
  );
}

function EventPane() {
  return (
    <main className="flex min-w-0 flex-1 flex-col">
      <div className="flex h-[23px] justify-end pr-[5px] pt-[3px]">
        <button type="button" aria-label="Open windows" className="flex h-[17px] w-[17px] items-center justify-center rounded-[2px] border border-[#0a81bf] bg-linear-to-b from-[#fff] to-[#cfe2f2]">
          <Drop color="#0a81bf" />
        </button>
      </div>
      <div className="flex flex-1 flex-col border border-[#0a81bf] pb-1 pl-[5px] pr-[9px] pt-[10px]">
        <section className="mr-px flex h-[90px] flex-col gap-[2px] rounded-[3px] border border-[#d0d0d0] pr-[10px]">
          <div className={`-mr-[10px] mb-[7px] h-[26px] ${PALE_BAR}`} />
          <div className="ml-[10px] h-5 border border-[#b4b4b4] bg-[#00f000]" />
          <div className="ml-[10px] h-5 border border-[#b4b4b4] bg-[#33cc33]" />
        </section>
        <section className="mt-[28px] flex flex-1 flex-col rounded-[3px] border border-[#0a81bf] p-[3px] shadow-[1px_1px_1px_#bbb]">
          <div className={`flex h-7 justify-end border border-[#0a81bf] py-[3px] pr-[7px] ${PALE_BAR}`}>
            <div className="flex w-64 items-center border border-[#b4b4b4] bg-white pr-px">
              <input aria-label="Search text" placeholder="Enter text to search..." className="min-w-0 flex-1 bg-transparent text-right pr-5 placeholder:text-[#8fb8d4] outline-none" />
              <button type="button" className="h-4 w-10 rounded-[2px] border border-[#0a81bf] bg-linear-to-b from-[#fff] to-[#cfe2f2] leading-[14px] text-[#0f5f96]">Search</button>
            </div>
          </div>
          <div className="flex flex-1 flex-col border border-[#b4b4b4] pr-px">
            <div className={`h-6 border border-[#0a81bf] ${PALE_BAR}`} />
            <div className="flex-1 bg-white" />
            <div className={`mb-px h-[26px] border border-[#0a81bf] ${PALE_BAR}`} />
          </div>
        </section>
      </div>
    </main>
  );
}

function MainWindow() {
  return (
    <div className="flex min-h-screen flex-col bg-[#d2d2d2]">
      <div className="relative border-t border-[#8f8f8f]">
        <TitleBar title="91: Financial Conference - Event - EventPro">
          <QuickAccess icons={[["Refresh", RefreshIcon, { green: true }]]} />
        </TitleBar>
        <button type="button" aria-label="Application menu" className="absolute left-[9px] top-[5px] z-10"><Orb /></button>
        <TabRow tabs={["Home", "View", "Tools"]} className="mx-[3px] pl-[65px]" />
      </div>
      <div className="mx-[3px] bg-[#e2e2e2] px-[2px]">
        <Ribbon groups={MAIN_GROUPS} />
      </div>
      <div className="mx-1 flex flex-1 gap-0.5 bg-[#fcfcfc] px-px pb-px pt-[2px]">
        <Sidebar />
        <EventPane />
      </div>
      <footer className={`flex h-6 items-center gap-[7px] border border-[#0a81bf] pl-1.5 ${PALE_BAR}`}>
        <span>User: AliceK_001000</span>
        <span>Memory Usage: 465MB</span>
        <svg width="12" height="12" viewBox="0 0 12 12" className="ml-auto mr-1" aria-hidden="true">
          <path d="M8 0H10V2H8ZM4 4H6V6H4ZM8 4H10V6H8ZM0 8H2V10H0ZM4 8H6V10H4ZM8 8H10V10H8Z" fill="#0a81bf" />
        </svg>
      </footer>
    </div>
  );
}

/* ---------- letter template dialog ---------- */

const ChevronBox = ({ className = "" }) => (
  <span className={`flex items-center justify-center rounded-[2px] border border-[#0a81bf] bg-linear-to-b from-[#fff] to-[#cfe2f2] ${className}`}>
    <Chevron />
  </span>
);

function Combo({ id, label, value, className }) {
  return (
    <span className={`relative flex h-5 border border-[#b4b4b4] bg-white ${className}`}>
      <select id={id} aria-label={label} className="min-w-0 flex-1 appearance-none bg-transparent pl-[3px] outline-none">
        <option>{value}</option>
      </select>
      <ChevronBox className="pointer-events-none absolute right-px top-px h-4 w-[13px]" />
    </span>
  );
}

function Row({ id, label, className = "", children }) {
  return (
    <div className={`flex items-center ${className}`}>
      <label htmlFor={id} className="w-[135px] shrink-0 whitespace-nowrap">{label}</label>
      {children}
    </div>
  );
}

function Panel({ title, className = "", children }) {
  return (
    <section className={`flex flex-col rounded-[3px] border border-[#d0d0d0] ${className}`}>
      <h2 className={`h-[19px] pl-2.5 leading-[19px] ${PALE_BAR}`}>{title}</h2>
      {children}
    </section>
  );
}

const FORMAT_BUTTONS = [
  ["Grow font", <span className="text-[17px] text-[#2c5f9c]"><sup className="text-[8px]">▴</sup>A</span>],
  ["Shrink font", <span className="text-[15px] text-[#2c5f9c]"><sup className="text-[8px]">▾</sup>A</span>],
  ["Bold", <span>B</span>],
  ["Italic", <span className="italic">I</span>],
  ["Underline", <span className="underline underline-offset-2">U</span>],
  ["Double underline", <span className="underline decoration-double underline-offset-1">U</span>],
  ["Strikethrough", <span className="line-through">S</span>],
  ["Double strikethrough", <span className="line-through decoration-double">S</span>],
  ["Superscript", <span>X<sup className="text-[8px] text-[#b01818]">2</sup></span>],
  ["Subscript", <span>X<sub className="text-[8px] text-[#b01818]">2</sub></span>],
];

const ToolButton = ({ label, w = "w-[26px]", children }) => (
  <button type="button" aria-label={label} className={`flex h-6 shrink-0 items-center justify-center ${w}`}>{children}</button>
);
const Sep = () => <span className="mx-[3px] h-5 w-px shrink-0 bg-[#b4b4b4]" />;
const SERIF = "font-['Liberation_Serif',serif] font-bold text-[15px] leading-[18px] text-[#333f5c] whitespace-nowrap";

function EditorToolbar() {
  return (
    <div className={`flex h-7 shrink-0 items-center border border-[#0a81bf] pl-1.5 ${PALE_BAR}`}>
      <button type="button" className="flex w-[105px] items-center gap-[3px] whitespace-nowrap"><WordIcon />Word Processor</button>
      <button type="button" className="flex w-[100px] items-center gap-[3px] whitespace-nowrap"><FolderIcon />Load Template</button>
      <Combo label="Font" value="Tahoma" className="mr-2 w-32" />
      <Combo label="Font size" value="10" className="mr-1 w-[50px]" />
      <div className={`flex items-center ${SERIF}`}>
        {FORMAT_BUTTONS.map(([label, glyph]) => (
          <ToolButton key={label} label={label}>{glyph}</ToolButton>
        ))}
        <Sep />
        <ToolButton label="Font color"><span className="border-b-[3px] border-black px-0.5 text-[16px] leading-[13px] text-[#1f4a80]">A</span></ToolButton>
        <ToolButton label="Font color options" w="w-3"><Drop /></ToolButton>
        <ToolButton label="Highlight"><HighlightIcon /></ToolButton>
        <ToolButton label="Highlight options" w="w-2.5"><Drop /></ToolButton>
        <ToolButton label="Change case"><span className="text-[#3c6cac]">Aa</span></ToolButton>
        <ToolButton label="Case options" w="w-2"><Drop /></ToolButton>
        <ToolButton label="Clear highlight"><EraserIcon /></ToolButton>
        <ToolButton label="Clear formatting"><span className="text-[17px] text-[#1f4a80]">A</span></ToolButton>
        <Sep />
        <ToolButton label="Cut"><CutIcon /></ToolButton>
        <ToolButton label="Copy"><CopyIcon /></ToolButton>
        <ToolButton label="Paste"><PasteIcon /></ToolButton>
        <ToolButton label="Paste special"><PasteSpecialIcon /></ToolButton>
      </div>
      <button type="button" aria-label="More tools" className="ml-auto flex h-full w-3 items-center justify-center border-l border-[#0a81bf] bg-linear-to-b from-[#f4f4f4] to-[#c4c4c4]">
        <Chevron size={6} width={2} />
      </button>
    </div>
  );
}

function ScrollBar() {
  const cap = "flex h-[17px] items-center justify-center rounded-[2px] border border-[#a4cbe4] bg-[#f2f5f8]";
  return (
    <div className="mr-px flex w-[17px] flex-col justify-between border-x border-[#cfe0f0] bg-[#f7f9fb]">
      <button type="button" aria-label="Scroll up" className={cap}><Chevron up size={10} color="#a4c4d8" /></button>
      <button type="button" aria-label="Scroll down" className={cap}><Chevron size={10} color="#a4c4d8" /></button>
    </div>
  );
}

const FIELD = "min-w-0 flex-1 border border-[#b4b4b4] bg-white";

function LetterDialog() {
  return (
    <div
      role="dialog"
      aria-label="Event Setup Letter Template"
      className="absolute bottom-[38px] left-[119px] right-[99px] top-[50px] z-20 flex flex-col overflow-hidden rounded-[5px] border border-[#2f7fc8] bg-[#e9e9ec]"
    >
      <TitleBar active title="Event Setup Letter Template - Event Setup Letter Template">
        <QuickAccess
          wide
          icons={[
            ["Save", SaveIcon],
            ["Save and close", SaveCloseIcon],
            ["Undo", UndoIcon],
            ["Refresh", RefreshIcon],
            ["Previous", UpIcon],
            ["Next", DownIcon],
          ]}
        />
      </TitleBar>
      <button type="button" aria-label="Dialog menu" className="absolute left-[8px] top-[5px] z-10"><Orb /></button>
      <TabRow tabs={["Home"]} className="pl-[67px]" />
      <div className="px-1">
        <Ribbon groups={DIALOG_GROUPS} />
      </div>
      <form className="mx-1 mb-1 flex min-h-0 flex-1 flex-col gap-[2px] bg-[#fcfcfc] px-[9px] pb-[9px] pt-[11px]" onSubmit={(e) => e.preventDefault()}>
        <Panel title="Letter Template">
          <div className="flex flex-col gap-[2px] pb-[10px] pl-[9px] pr-[10px] pt-[10px]">
            <Row id="code" label="Letter Code:">
              <ErrorIcon />
              <span className="flex h-5 min-w-0 flex-1 items-center border border-[#b4b4b4] bg-[#ffffe1] pl-[3px]">
                <span className="h-3.5 w-px bg-black" />
                <input id="code" className="h-full min-w-0 flex-1 bg-transparent outline-none" />
              </span>
            </Row>
            <Row id="description" label="Description:">
              <ErrorIcon />
              <input id="description" className={`h-5 ${FIELD}`} />
            </Row>
            <Row id="reference" label="Communication Reference:">
              <span className={`flex h-[22px] items-center gap-[2px] pr-px ${FIELD}`}>
                <input id="reference" className="h-full min-w-0 flex-1 bg-transparent outline-none" />
                <button type="button" aria-label="Clear" className="flex h-[18px] w-4 items-center justify-center rounded-[2px] border border-[#0a81bf] bg-linear-to-b from-[#fff] to-[#cfe2f2]">
                  <svg width="9" height="9" viewBox="0 0 9 9"><path d="M1 1L8 8M8 1L1 8" stroke="#0a81bf" strokeWidth="1.500" /></svg>
                </button>
                <button type="button" aria-label="Open list" className="flex"><ChevronBox className="h-[18px] w-[13px]" /></button>
                <button type="button" aria-label="Look up" className="flex h-[18px] w-[22px] items-center justify-center rounded-[2px] border border-[#0a81bf] bg-linear-to-b from-[#fff] to-[#cfe2f2]"><LookupIcon /></button>
              </span>
            </Row>
            <Row id="finalized" label="Finalized:" className="h-[19px]">
              <input id="finalized" type="checkbox" className="ml-px size-[13px] appearance-none rounded-[2px] border border-[#2c7fb4] bg-linear-to-b from-[#d8dcdf] to-[#fafafa]" />
            </Row>
            <Row id="merge" label="Merge Table:">
              <Combo id="merge" label="Merge Table" value="(none)" className="min-w-0 flex-1" />
            </Row>
          </div>
        </Panel>
        <Panel title="Content" className="min-h-0 flex-1">
          <div className="mb-[10px] ml-[10px] mr-[10px] mt-[10px] flex min-h-0 flex-1 flex-col border border-black">
            <EditorToolbar />
            <div className="flex min-h-0 flex-1 border border-[#b4b4b4] bg-white">
              <textarea aria-label="Letter content" className="min-w-0 flex-1 resize-none outline-none" />
              <ScrollBar />
            </div>
          </div>
        </Panel>
      </form>
    </div>
  );
}

export default function App() {
  return (
    <div className="relative min-h-screen font-['Roboto',Tahoma,sans-serif] text-[11px] leading-[13px] text-black">
      <Defs />
      <MainWindow />
      <LetterDialog />
    </div>
  );
}
